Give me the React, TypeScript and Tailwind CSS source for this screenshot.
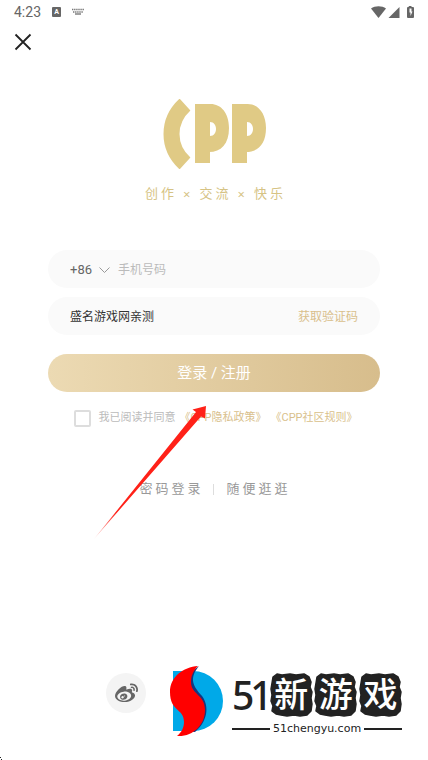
import { ReactNode } from "react";
import { FaWeibo } from "react-icons/fa";

const tiles = ["新", "游", "戏"];

function StatusBar() {
  return (
    <header className="flex h-6 items-center justify-between pl-[14px] pr-[13px] text-[#666]">
      <div className="flex items-center">
        <span className="w-[38px] font-[Roboto] text-sm">4:23</span>
        <span className="flex h-[10px] w-[9px] items-center justify-center rounded-[1px] bg-[#666] text-[7px] font-bold leading-none text-white">
          A
        </span>
        <svg className="ml-[11px]" width="12" height="8" viewBox="0 0 12 8" stroke="#777" fill="none">
          <path d="M0 1.5h12M1 4h10" strokeDasharray="1.4 .7" strokeWidth="1.4" />
          <path d="M3 6h6" strokeWidth="1.4" />
        </svg>
      </div>
      <svg width="44" height="12" viewBox="0 0 44 12" fill="#666" aria-hidden="true">
        <path d="M0 2.5C4-.6 11-.6 15 2.5L7.5 12Z" />
        <path d="M28.5 1v11h-11Z" />
        <path
          fillRule="evenodd"
          d="M37.5 0h3v1h1.500q1 0 1 1v9q0 1-1 1h-5q-1 0-1-1V2q0-1 1-1h1ZM40.500 2.500h-2v4h1v3.500l2-4.500h-1Z"
        />
      </svg>
    </header>
  );
}

function Bowl() {
  return (
    <>
      <rect x="32" y="5" width="15" height="59" />
      <path fillRule="evenodd" d="M46 5c11-1 20 8 20 24s-8 24-20 24ZM47 23v14c8 0 8-14 0-14Z" />
    </>
  );
}

function Brand() {
  return (
    <svg width="104" height="70" viewBox="0 0 104 70" fill="#e0ca85" role="img" aria-label="CPP">
      <path d="M23 5.5C5 22 5 48 23 64.5" fill="none" stroke="#e0ca85" strokeWidth="16" />
      <g transform="translate(1)">
        <Bowl />
      </g>
      <g transform="translate(38)">
        <Bowl />
      </g>
    </svg>
  );
}

function Field({ children }: { children: ReactNode }) {
  return (
    <div className="flex h-[38px] items-center rounded-full bg-[#fafafa] px-[22px] pt-px text-xs">
      {children}
    </div>
  );
}

function Arrow() {
  return (
    <svg
      className="pointer-events-none absolute -top-[2px] left-[46px]"
      width="114"
      height="134"
      viewBox="0 0 114 134"
      aria-hidden="true"
    >
      <defs>
        <linearGradient id="tail" x1="0" y1="1" x2="1" y2="0">
          <stop offset="0" stopColor="#ff2118" stopOpacity=".2" />
          <stop offset=".2" stopColor="#ff2118" />
        </linearGradient>
      </defs>
      <path d="M112 0L98.5 3.5l3.5 2.5L0 133 107 10.500l4 2Z" fill="url(#tail)" />
    </svg>
  );
}

function SiteMark() {
  return (
    <div className="flex items-center gap-2">
      <svg width="54" height="72" viewBox="0 0 54 72" aria-hidden="true">
        <path d="M3 6h20a30 30 0 0 1 0 60H3Z" fill="#00a9e8" />
        <path d="M29 1C18 14 24 22 32 31c8 11 5 26-7 36L14 66 20 8Z" fill="#14377f" />
        <path
          d="M28 1C13 2 0 12 0 27 0 47 14 43 14 57c0 5-2 10-7 14 16 1 28-11 28-26 0-16-14-15-14-28C21 10 24 5 28 1Z"
          fill="#f00"
        />
      </svg>
      <div className="w-[170px] pt-2 text-[#222]">
        <div className="flex items-center justify-between">
          <span className="w-[36px] font-['Noto_Sans'] text-[39px] font-medium leading-[44px] tracking-[-4px]">
            51
          </span>
          {tiles.map((tile) => (
            <span key={tile} className="relative flex h-[44px] w-[43px] items-center justify-center">
              <svg className="absolute inset-0" width="43" height="44" viewBox="0 0 43 44" aria-hidden="true">
                <path
                  d="M7 1l5 1 8-1 6 1 8-1 5 3 2 5-1 5 2 5-1 6 1 6-1 7-4 4-7 1-6-1-7 1-6-1-5-1-4-3 1-5-2-5 1-6-1-6 1-6 1-6Z"
                  fill="#222"
                  stroke="#222"
                  strokeWidth="1.5"
                  strokeLinejoin="round"
                />
              </svg>
              <span className="relative text-[34px] font-medium leading-none text-white">{tile}</span>
            </span>
          ))}
        </div>
        <div className="mt-1 flex items-center gap-[3px]">
          <span className="h-[2px] flex-1 bg-[#222]" />
          <span className="font-['DejaVu_Sans'] text-[11px] leading-4">51chengyu.com</span>
          <span className="h-[2px] flex-1 bg-[#222]" />
        </div>
      </div>
    </div>
  );
}

export default function App() {
  return (
    <div className="relative flex min-h-screen flex-col bg-white font-[Roboto,'Noto_Sans_CJK_SC',sans-serif]">
      <StatusBar />
      <button type="button" aria-label="关闭" className="ml-[14px] mt-[9px] self-start">
        <svg width="18" height="18" viewBox="0 0 18 18" stroke="#222" strokeWidth="1.8">
          <path d="M1.5 1.5l15 15M16.5 1.5l-15 15" />
        </svg>
      </button>

      <main className="flex flex-col px-12">
        <div className="mt-[48px] flex flex-col items-center">
          <Brand />
          <p className="mt-[15px] flex gap-[6px] pl-[3px] text-[13px] leading-5 tracking-[3px] text-[#d6c384]">
            <span>创作</span>
            <span className="font-['Noto_Sans']">×</span>
            <span>交流</span>
            <span className="font-['Noto_Sans']">×</span>
            <span>快乐</span>
          </p>
        </div>

        <form className="mt-[46px] flex flex-col" onSubmit={(e) => e.preventDefault()}>
          <div className="flex flex-col gap-[9px]">
            <Field>
              <span className="relative flex w-12 items-center">
                <select
                  aria-label="区号"
                  className="w-full appearance-none bg-transparent text-[13px] text-[#666] outline-none"
                >
                  <option>+86</option>
                </select>
                <svg
                  className="pointer-events-none absolute right-2 top-[6px]"
                  width="11"
                  height="7"
                  viewBox="0 0 11 7"
                  fill="none"
                  stroke="#999"
                >
                  <path d="M.5.5l5 5 5-5" />
                </svg>
              </span>
              <input
                type="tel"
                aria-label="手机号码"
                placeholder="手机号码"
                className="min-w-0 flex-1 bg-transparent outline-none placeholder:text-[#bbb]"
              />
            </Field>
            <Field>
              <input
                type="text"
                aria-label="验证码"
                defaultValue="盛名游戏网亲测"
                className="min-w-0 flex-1 bg-transparent text-[#333] outline-none"
              />
              <button type="button" className="text-[#d9bf8c]">
                获取验证码
              </button>
            </Field>
          </div>
          <button
            type="submit"
            className="mt-[19px] h-[38px] rounded-full bg-linear-to-r from-[#ecdab3] to-[#d7bd8c] pt-px text-[15px] text-white"
          >
            登录 / 注册
          </button>

          <div className="relative mt-4 flex items-center justify-center pl-1 text-[11px] leading-5 text-[#bbb]">
            <input
              id="agree"
              type="checkbox"
              className="mr-[7px] h-[17px] w-[17px] appearance-none rounded-[2px] border-2 border-[#ddd] checked:bg-[#d9bf8c]"
            />
            <label htmlFor="agree">我已阅读并同意</label>
            <a href="#privacy" className="ml-1 text-[#d9bf8c]">
              《CPP隐私政策》
            </a>
            <a href="#rules" className="ml-1 text-[#d9bf8c]">
              《CPP社区规则》
            </a>
            <Arrow />
          </div>
        </form>

        <nav className="mt-[51px] flex items-center justify-center pl-[2px] text-[13px] leading-5 tracking-[3px] text-[#999]">
          <a href="#password">密码登录</a>
          <span className="ml-[9px] mr-[13px] h-[11px] w-px bg-[#ddd]" />
          <a href="#browse">随便逛逛</a>
        </nav>
      </main>

      <footer className="mt-auto flex items-start justify-center gap-6 pb-[23px] pl-[80px]">
        <button
          type="button"
          aria-label="微博登录"
          className="mt-2 flex h-10 w-10 items-center justify-center rounded-full bg-[#f4f4f4] text-[#666]"
        >
          <FaWeibo size={23} />
        </button>
        <SiteMark />
      </footer>
      <svg className="absolute bottom-0 left-0" width="2" height="3" viewBox="0 0 2 3" aria-hidden="true">
        <path d="M0 0h1v1H0ZM1 2h1v1H1Z" fill="#222" />
      </svg>
    </div>
  );
}
